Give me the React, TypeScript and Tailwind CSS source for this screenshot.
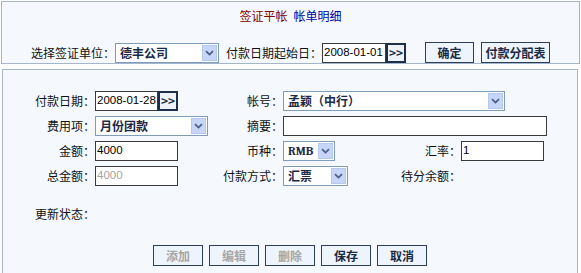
import * as React from "react"

const FONT = { fontFamily: '"Noto Sans CJK SC", "Noto Sans", sans-serif' }

// classic "select" look: thin blue border, periwinkle arrow box
function Sel({ w, value, mono }: { w: string; value: string; mono?: boolean }) {
  return (
    <div className={`${w} flex h-[20px] items-stretch border border-[#7f9db9] bg-white p-[1px]`}>
      <span
        className={`flex-1 truncate pl-[3px] text-[12px] leading-[16px] font-bold text-[#1b2947] ${mono ? "font-serif" : ""}`}
      >
        {value}
      </span>
      <span className="flex w-[15px] items-center justify-center border border-[#b7c8ef] bg-[#c6d5f8]">
        <svg width="9" height="6" viewBox="0 0 9 6">
          <path d="M1 1.2 L4.5 4.6 L8 1.2" fill="none" stroke="#4b5f8c" strokeWidth="1.8" />
        </svg>
      </span>
    </div>
  )
}

function Inp({ w, value = "", dim }: { w: string; value?: string; dim?: boolean }) {
  return (
    <div
      className={`${w} flex h-[20px] items-center overflow-hidden border border-[#3a3a3a] bg-white pl-[1px] text-[11.5px] whitespace-nowrap ${dim ? "text-[#a3a3a3]" : "text-black"}`}
      style={{ fontFamily: '"Liberation Sans", Arial, sans-serif' }}
    >
      {value}
    </div>
  )
}

function Pick() {
  return (
    <div className="flex h-[20px] w-[20px] shrink-0 items-center justify-center border-2 border-[#1e2e48] bg-[#edf2f9] text-[12px] leading-none font-bold text-[#1e2e48]">
      {">>"}
    </div>
  )
}

function Btn({ w, children, off }: { w: string; children: React.ReactNode; off?: boolean }) {
  return (
    <div
      className={`${w} flex h-[21px] items-center justify-center border border-[#2c3e58] bg-[#eef4fb] text-[12px] font-bold ${off ? "text-[#a6a6a6]" : "text-[#1b2a44]"}`}
    >
      {children}
    </div>
  )
}

function Label({ children }: { children: React.ReactNode }) {
  return <div className="flex h-[20px] items-center justify-end text-[12px] whitespace-nowrap text-[#111]">{children}</div>
}

export default function App() {
  return (
    <div className="h-[273px] w-[581px] overflow-hidden bg-white pt-[1px]" style={FONT}>
      {/* query bar */}
      <div className="ml-[1px] h-[63px] w-[579px] border border-[#a3b6cb] bg-[#f5f9fd]">
        <div className="mt-[7px] flex h-[14px] items-center justify-center gap-[6px] text-[12px]">
          <span className="text-[#800000]">签证平帐</span>
          <span className="text-[#0000a8]">帐单明细</span>
        </div>
        <div className="mt-[19px] flex items-center justify-center text-[12px] whitespace-nowrap text-[#111]">
          <span className="w-[84px]">选择签证单位：</span>
          <Sel w="w-[104px]" value="德丰公司" />
          <span className="ml-[7px] w-[96px]">付款日期起始日：</span>
          <Inp w="w-[64px]" value="2008-01-01" />
          <Pick />
          <div className="ml-[19px]">
            <Btn w="w-[49px]">确定</Btn>
          </div>
          <div className="ml-[7px]">
            <Btn w="w-[69px]">付款分配表</Btn>
          </div>
        </div>
      </div>

      {/* entry form */}
      <div className="mt-[5px] ml-[2px] h-[220px] w-[576px] border border-[#a3b6cb] bg-[#f5f9fd]">
        <div className="grid grid-cols-[92px_128px_60px_117px_61px_1fr] gap-y-[5px] pt-[21px]">
          <Label>付款日期：</Label>
          <div className="flex">
            <Inp w="w-[63px]" value="2008-01-28" />
            <Pick />
          </div>
          <Label>帐号：</Label>
          <div className="col-span-3">
            <Sel w="w-[222px]" value="孟颖（中行）" />
          </div>

          <Label>费用项：</Label>
          <div>
            <Sel w="w-[113px]" value="月份团款" />
          </div>
          <Label>摘要：</Label>
          <div className="col-span-3">
            <Inp w="w-[264px]" />
          </div>

          <Label>金额：</Label>
          <div>
            <Inp w="w-[83px]" value="4000" />
          </div>
          <Label>币种：</Label>
          <div>
            <Sel w="w-[52px]" value="RMB" mono />
          </div>
          <Label>汇率：</Label>
          <div>
            <Inp w="w-[83px]" value="1" />
          </div>

          <Label>总金额：</Label>
          <div>
            <Inp w="w-[83px]" value="4000" dim />
          </div>
          <Label>付款方式：</Label>
          <div>
            <Sel w="w-[65px]" value="汇票" />
          </div>
          <Label>待分余额：</Label>
          <div />
        </div>

        <div className="mt-[18px] grid grid-cols-[92px_1fr]">
          <Label>更新状态：</Label>
        </div>

        <div className="mt-[21px] flex justify-center gap-[6px]">
          <Btn w="w-[50px]" off>添加</Btn>
          <Btn w="w-[50px]" off>编辑</Btn>
          <Btn w="w-[50px]" off>删除</Btn>
          <Btn w="w-[50px]">保存</Btn>
          <Btn w="w-[50px]">取消</Btn>
        </div>
      </div>
    </div>
  )
}
